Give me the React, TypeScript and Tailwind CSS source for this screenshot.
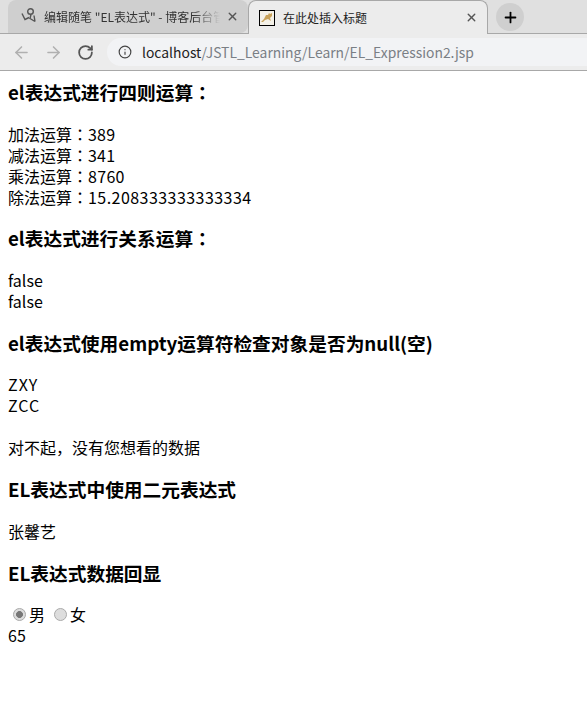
import { ArrowLeft, ArrowRight, RotateCw, Info, X, Plus } from 'lucide-react'

const font = "font-['Noto_Sans_CJK_SC','Microsoft_YaHei',sans-serif]"

function Colon() {
  return <span className="font-['Noto_Sans_CJK_JP',sans-serif]">：</span>
}

function Heading({ children }: { children: React.ReactNode }) {
  return <h3 className="text-[18.72px] leading-[25px] font-bold mt-[17.7px] mb-[19.7px] first:mt-[8px]">{children}</h3>
}

function TabBar() {
  return (
    <div className="h-[34px] bg-[#e0e0e0] flex items-end pl-2 border-b border-[#a8a8a8]">
      <div className="w-[240px] h-[33px] bg-[#cfcfcf] rounded-t-lg rounded-br-lg flex items-center pl-[13px] pr-[9px] text-xs text-[#333]">
        <svg width="16" height="16" viewBox="0 0 16 16" fill="none" stroke="#555" strokeWidth="1.4" className="shrink-0 -mt-1">
          <circle cx="9.5" cy="4.5" r="2.8" />
          <path d="M1 6.5l3 6 4-2M10 7.5l-1 4 5 3M14 14.5l-1-6" />
        </svg>
        <span className="ml-[7px] whitespace-nowrap overflow-hidden flex-1 [mask-image:linear-gradient(to_right,black_85%,transparent)]">
          编辑随笔 "EL表达式" - 博客后台管理
        </span>
        <X size={13} strokeWidth={2.5} className="ml-[6px] text-[#555] shrink-0" />
      </div>
      <div className="w-[240px] h-[34px] -mb-px bg-[#ececec] rounded-t-lg border border-b-0 border-[#a8a8a8] flex items-center pl-[10px] pr-[9px] text-xs text-[#222]">
        <svg width="16" height="16" viewBox="0 0 16 16" className="shrink-0">
          <rect x="0.5" y="0.5" width="15" height="15" fill="#f4f1e8" stroke="#000" />
          <path d="M2 12l3-3 2-4 2 0 1-2 1 1 2-1 0 3-2 2 1 3-3-2-3 1-2 2z" fill="#c9a25a" />
        </svg>
        <span className="ml-2 flex-1 whitespace-nowrap">在此处插入标题</span>
        <X size={13} strokeWidth={2.5} className="text-[#555] shrink-0" />
      </div>
      <div className="w-7 h-7 rounded-full bg-[#cfcfcf] flex items-center justify-center ml-2 mb-[2px]">
        <Plus size={17} strokeWidth={2.5} className="text-black" />
      </div>
    </div>
  )
}

function Toolbar() {
  return (
    <div className="h-[37px] bg-[#ececec] flex items-center border-b border-[#a8a8a8]">
      <ArrowLeft size={19} className="ml-[12px] text-[#b0b0b0]" />
      <ArrowRight size={19} className="ml-[13px] text-[#b0b0b0]" />
      <RotateCw size={17} strokeWidth={2.5} className="ml-[14px] text-[#555]" />
      <div className="ml-[13px] flex-1 h-7 bg-[#f2f3f5] rounded-l-full flex items-center pl-[11px] text-[13.9px] text-[#7a7f85]">
        <Info size={14} className="text-[#444]" />
        <span className="ml-[10px]">
          <span className="text-[#222]">localhost</span>/JSTL_Learning/Learn/EL_Expression2.jsp
        </span>
      </div>
    </div>
  )
}

export default function App() {
  return (
    <div className={`h-[713px] bg-white overflow-hidden text-black ${font}`}>
      <TabBar />
      <Toolbar />
      <div className="px-2 text-base leading-[21px]">
        <Heading>el表达式进行四则运算<Colon /></Heading>
        <div>加法运算<Colon /><span className="tracking-[0.2px]">389</span></div>
        <div>减法运算<Colon /><span className="tracking-[0.2px]">341</span></div>
        <div>乘法运算<Colon /><span className="tracking-[0.3px]">8760</span></div>
        <div>除法运算<Colon /><span className="tracking-[0.45px]">15.208333333333334</span></div>
        <Heading>el表达式进行关系运算<Colon /></Heading>
        <div>false</div>
        <div>false</div>
        <Heading>el表达式使用empty运算符检查对象是否为null(空)</Heading>
        <div className="tracking-[1px]">ZXY</div>
        <div className="tracking-[1px]">ZCC</div>
        <div className="mt-[21px]">对不起，没有您想看的数据</div>
        <Heading>EL表达式中使用二元表达式</Heading>
        <div>张馨艺</div>
        <Heading>EL表达式数据回显</Heading>
        <div className="flex items-center">
          <input type="radio" name="sex" defaultChecked className="appearance-none w-[13px] h-[13px] ml-[5px] mr-[3px] rounded-full border border-[#aaa] bg-[#ddd] checked:bg-[radial-gradient(circle,#777_40%,#ddd_48%)]" />
          <span>男</span>
          <input type="radio" name="sex" className="appearance-none w-[13px] h-[13px] ml-[9px] mr-[3px] rounded-full border border-[#aaa] bg-[#ddd]" />
          <span>女</span>
        </div>
        <div>65</div>
      </div>
    </div>
  )
}
